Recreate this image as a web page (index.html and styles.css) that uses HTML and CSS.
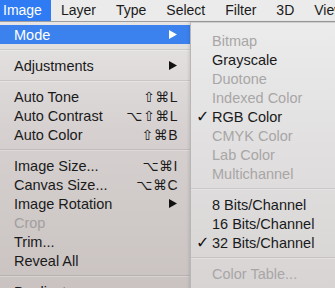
FILE: index.html
```html
<!DOCTYPE html>
<html lang="en">

<head>
  <meta charset="UTF-8" />
  <meta name="viewport" content="width=device-width, initial-scale=1.0">
  <title>Image menu</title>
  <link rel="stylesheet" href="styles.css">
</head>

<body>

  <div id="barra" class="barra-menu">
    <span class="titulo activo">Image</span>
    <span class="titulo">Layer</span>
    <span class="titulo">Type</span>
    <span class="titulo">Select</span>
    <span class="titulo">Filter</span>
    <span class="titulo">3D</span>
    <span class="titulo">View</span>
  </div>

  <div id="area">
    <div id="menuImagen" class="menu">
      <div class="item seleccionado">
        <span>Mode</span>
        <svg class="flecha" width="8" height="9" viewBox="0 0 8 9"><polygon points="0,0 8,4.5 0,9" fill="#fff" /></svg>
      </div>
      <div class="separador"></div>
      <div class="item">
        <span>Adjustments</span>
        <svg class="flecha" width="8" height="9" viewBox="0 0 8 9"><polygon points="0,0 8,4.5 0,9" fill="#111" /></svg>
      </div>
      <div class="separador"></div>
      <div class="item"><span>Auto Tone</span><span class="atajo">⇧⌘L</span></div>
      <div class="item"><span>Auto Contrast</span><span class="atajo">⌥⇧⌘L</span></div>
      <div class="item"><span>Auto Color</span><span class="atajo">⇧⌘B</span></div>
      <div class="separador"></div>
      <div class="item"><span>Image Size...</span><span class="atajo">⌥⌘I</span></div>
      <div class="item"><span>Canvas Size...</span><span class="atajo">⌥⌘C</span></div>
      <div class="item">
        <span>Image Rotation</span>
        <svg class="flecha" width="8" height="9" viewBox="0 0 8 9"><polygon points="0,0 8,4.5 0,9" fill="#111" /></svg>
      </div>
      <div class="item apagado"><span>Crop</span></div>
      <div class="item"><span>Trim...</span></div>
      <div class="item"><span>Reveal All</span></div>
      <div class="separador"></div>
      <div class="item"><span>Duplicate...</span></div>
    </div>

    <div id="submenuModo" class="menu submenu">
      <div class="item apagado"><span class="marca"></span><span>Bitmap</span></div>
      <div class="item"><span class="marca"></span><span>Grayscale</span></div>
      <div class="item apagado"><span class="marca"></span><span>Duotone</span></div>
      <div class="item apagado"><span class="marca"></span><span>Indexed Color</span></div>
      <div class="item"><span class="marca">✓</span><span>RGB Color</span></div>
      <div class="item apagado"><span class="marca"></span><span>CMYK Color</span></div>
      <div class="item apagado"><span class="marca"></span><span>Lab Color</span></div>
      <div class="item apagado"><span class="marca"></span><span>Multichannel</span></div>
      <div class="separador"></div>
      <div class="item"><span class="marca"></span><span>8 Bits/Channel</span></div>
      <div class="item"><span class="marca"></span><span>16 Bits/Channel</span></div>
      <div class="item"><span class="marca">✓</span><span>32 Bits/Channel</span></div>
      <div class="separador"></div>
      <div class="item apagado"><span class="marca"></span><span>Color Table...</span></div>
    </div>
  </div>

</body>

</html>
```

FILE: styles.css
```css
body {
  font-family: "Liberation Sans", Arial, "DejaVu Sans", sans-serif;
  margin: 0;
  padding: 0;
  overflow: hidden;
  width: 335px;
  height: 288px;
  background: #d8d4d4;
  color: #1a1a1a;
}

.barra-menu {
  display: flex;
  height: 21px;
  background: #ebebeb;
  border-bottom: 1px solid #9e9e9e;
  font-size: 14px;
  line-height: 21px;
  white-space: nowrap;
}

.titulo {
  padding: 0 10px;
}

.titulo.activo {
  padding: 0 9px 0 3px;
  background: #2f7bf3;
  color: white;
}

#area {
  position: relative;
}

.menu {
  font-size: 14.5px;
}

#menuImagen {
  width: 200px;
  padding-top: 3px;
  height: 270px;
  background: linear-gradient(#e6e4e4, #d6d1d0 40%, #c9c2c1);
}

.item {
  display: flex;
  align-items: center;
  justify-content: space-between;
  height: 19px;
  padding: 0 22px 0 14px;
  white-space: nowrap;
}

.item.seleccionado {
  background: #3c82ee;
  color: white;
}

.item.apagado {
  color: #a29f9f;
}

.atajo {
  font-size: 14px;
  letter-spacing: 0.5px;
}

.flecha {
  margin-right: 1px;
}

.separador {
  height: 12px;
  position: relative;
}

.separador::after {
  content: "";
  position: absolute;
  left: 0;
  right: 0;
  top: 5px;
  border-top: 1px solid rgba(0, 0, 0, 0.09);
  border-bottom: 1px solid rgba(255, 255, 255, 0.25);
}

.submenu {
  position: absolute;
  top: 0;
  left: 190px;
  width: 160px;
  height: 270px;
  padding-top: 8px;
  background: linear-gradient(#ececec, #e0dede 50%, #d7d3d3);
  border-left: 1px solid #b8b6b6;
  border-top: 1px solid #cfcfcf;
  box-shadow: -1px 0 3px rgba(0, 0, 0, 0.12);
}

.submenu .item {
  justify-content: flex-start;
  padding: 0 0 0 5px;
}

.marca {
  width: 16px;
  font-size: 16px;
  font-weight: bold;
  color: #111;
}

.submenu .item.apagado {
  color: #a8a6a6;
}
```
